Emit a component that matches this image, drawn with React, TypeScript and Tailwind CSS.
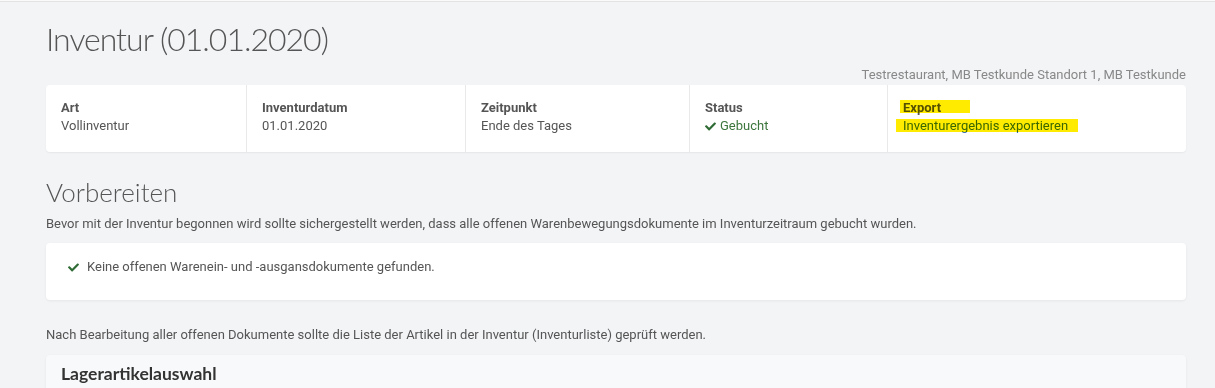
import React from "react";
import { FaCheck } from "react-icons/fa";

const head = { fontFamily: "Lato, 'Open Sans', sans-serif" };

const Highlight: React.FC<{ className: string }> = ({ className }) => (
  <span className={`absolute bg-[#ffeb00] mix-blend-multiply pointer-events-none ${className}`} />
);

const InfoCell: React.FC<{ label: string; width: string; last?: boolean; children: React.ReactNode }> = ({
  label,
  width,
  last,
  children,
}) => (
  <div className={`${width} ${last ? "" : "border-r border-[#e9e9e9]"} pl-[15px] pt-[14px] pb-[15px]`}>
    <div className="font-bold leading-[18px]">{label}</div>
    <div className="leading-[18px]">{children}</div>
  </div>
);

export default function App() {
  return (
    <div
      className="min-h-[388px] bg-[#f3f4f6] text-[13px] text-[#555] overflow-hidden"
      style={{ fontFamily: "Roboto, 'Liberation Sans', sans-serif" }}
    >
      <div className="h-[2px] bg-[#fafafa] border-b border-[#e3e3e3]" />
      <div className="pl-[46px] w-[1186px]">
        <h1 className="pt-[17px] text-[32px] font-light leading-[40px] tracking-[-1px] text-[#555]" style={head}>
          Inventur (01.01.2020)
        </h1>

        <div className="text-right text-[#888] leading-[18px] mt-[7px] mb-[1px]">
          Testrestaurant, MB Testkunde Standort 1, MB Testkunde
        </div>

        <div className="flex bg-white rounded-[4px] shadow-[0_1px_2px_rgba(0,0,0,0.06)]">
          <InfoCell label="Art" width="w-[201px]">
            Vollinventur
          </InfoCell>
          <InfoCell label="Inventurdatum" width="w-[219px]">
            01.01.2020
          </InfoCell>
          <InfoCell label="Zeitpunkt" width="w-[224px]">
            Ende des Tages
          </InfoCell>
          <InfoCell label="Status" width="w-[198px]">
            <span className="text-[#3c763d] inline-flex items-center gap-[4px]">
              <FaCheck className="text-[#2f6b35] text-[11px]" />
              Gebucht
            </span>
          </InfoCell>
          <div className="flex-1 pl-[15px] pt-[14px] pb-[15px] relative">
            <div className="font-bold leading-[18px] relative">
              Export
              <Highlight className="left-[-3px] top-[1px] w-[70px] h-[13px]" />
            </div>
            <div className="leading-[18px] relative text-[#3a70b5]">
              Inventurergebnis exportieren
              <Highlight className="left-[-7px] top-[2px] w-[182px] h-[13px]" />
            </div>
          </div>
        </div>

        <h2 className="mt-[24px] text-[26px] font-light leading-[32px] text-[#555]" style={head}>
          Vorbereiten
        </h2>
        <p className="mt-[7px] leading-[18px]">
          Bevor mit der Inventur begonnen wird sollte sichergestellt werden, dass alle offenen
          Warenbewegungsdokumente im Inventurzeitraum gebucht wurden.
        </p>

        <div className="mt-[10px] bg-white rounded-[4px] shadow-[0_1px_3px_rgba(0,0,0,0.06)] h-[57px] pl-[22px] pt-[15px] flex items-start gap-[8px]">
          <FaCheck className="text-[#2f6b35] text-[11px] mt-[4px]" />
          <span className="leading-[18px]">Keine offenen Warenein- und -ausgansdokumente gefunden.</span>
        </div>

        <p className="mt-[26px] leading-[18px]">
          Nach Bearbeitung aller offenen Dokumente sollte die Liste der Artikel in der Inventur (Inventurliste) geprüft werden.
        </p>

        <div className="mt-[11px] bg-[#f8f9fa] rounded-t-[4px] shadow-[0_1px_3px_rgba(0,0,0,0.06)] h-[40px] pl-[15px] pt-[9px]">
          <h3 className="text-[17.5px] font-bold leading-[20px] text-[#333]" style={head}>
            Lagerartikelauswahl
          </h3>
        </div>
      </div>
    </div>
  );
}
